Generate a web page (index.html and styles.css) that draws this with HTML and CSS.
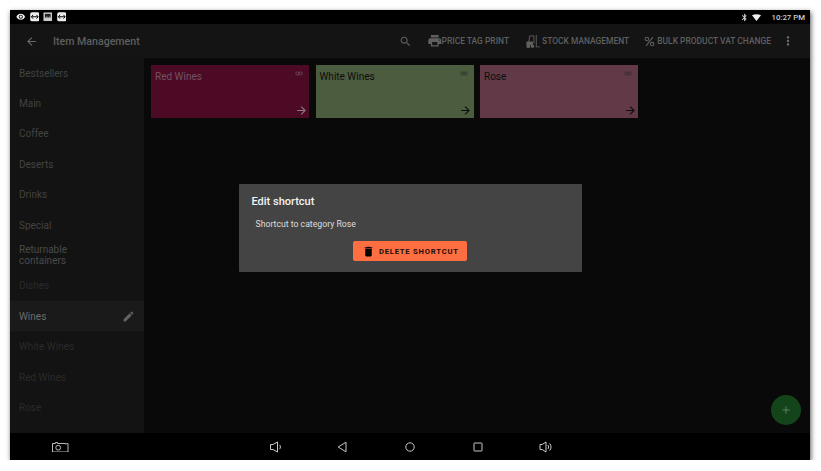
FILE: index.html
```html
<!DOCTYPE html>
<html lang="en">
<head>
  <meta charset="UTF-8" />
  <title>Item Management</title>
  <link rel="stylesheet" href="styles.css">
</head>
<body>
  <div class="device">
    <div class="status-bar">
      <div class="status-left">
        <svg class="st-icon" viewBox="0 0 24 24"><path d="M12 4.5C7 4.5 2.73 7.61 1 12c1.73 4.39 6 7.5 11 7.5s9.27-3.11 11-7.5c-1.73-4.39-6-7.5-11-7.5zM12 17c-2.76 0-5-2.24-5-5s2.24-5 5-5 5 2.24 5 5-2.24 5-5 5zm0-8c-1.66 0-3 1.34-3 3s1.34 3 3 3 3-1.34 3-3-1.34-3-3-3z"/></svg>
        <svg class="st-icon" viewBox="0 0 10 10"><rect x="0.2" y="0.2" width="9.6" height="9.6" rx="2"/><path d="M1.5 5h7M3.2 3 1.5 5l1.7 2M6.8 3l1.7 2-1.7 2" fill="none" stroke="#000" stroke-width="1"/></svg>
        <svg class="st-icon" viewBox="0 0 10 10"><rect x="0.5" y="0.5" width="9" height="9" fill="#ccc"/><rect x="2" y="2" width="6" height="4" fill="#222"/><path d="M2 6 4 4.5 5.5 5.5 7 4.5 8 6z" fill="#999"/></svg>
        <svg class="st-icon" viewBox="0 0 10 10"><rect x="0.2" y="0.2" width="9.6" height="9.6" rx="2"/><path d="M1.5 5h7M3.2 3 1.5 5l1.7 2M6.8 3l1.7 2-1.7 2" fill="none" stroke="#000" stroke-width="1"/></svg>
      </div>
      <div class="status-right">
        <svg class="bt-icon" viewBox="0 0 24 24"><path d="M17.71 7.71L12 2h-1v7.59L6.41 5 5 6.41 10.59 12 5 17.59 6.41 19 11 14.41V22h1l5.71-5.71-4.3-4.29 4.3-4.29zM13 5.83l1.88 1.88L13 9.59V5.83zm1.88 10.46L13 18.17v-3.76l1.88 1.88z"/></svg>
        <svg class="wifi-icon" viewBox="0 0 12 9"><path d="M0 1.6C3.4-.5 8.6-.5 12 1.6L6 9z"/></svg>
        <span class="clock">10:27 PM</span>
      </div>
    </div>

    <header class="app-bar">
      <svg class="back-icon" viewBox="0 0 24 24"><path d="M20 11H7.83l5.59-5.59L12 4l-8 8 8 8 1.41-1.41L7.83 13H20v-2z"/></svg>
      <h1>Item Management</h1>
      <div class="actions">
        <svg class="search-icon" viewBox="0 0 24 24"><path d="M15.5 14h-.79l-.28-.27C15.41 12.59 16 11.11 16 9.5 16 5.91 13.09 3 9.5 3S3 5.91 3 9.5 5.91 16 9.5 16c1.61 0 3.09-.59 4.23-1.57l.27.28v.79l5 4.99L20.49 19l-4.99-5zm-6 0C7.01 14 5 11.99 5 9.5S7.01 5 9.5 5 14 7.01 14 9.5 11.99 14 9.5 14z"/></svg>
        <div class="action print">
          <svg viewBox="0 0 24 24"><path d="M19 8H5c-1.66 0-3 1.34-3 3v6h4v4h12v-4h4v-6c0-1.66-1.34-3-3-3zm-3 11H8v-5h8v5zm3-7c-.55 0-1-.45-1-1s.45-1 1-1 1 .45 1 1-.45 1-1 1zm-1-9H6v4h12V3z"/></svg>
          <span>PRICE TAG PRINT</span>
        </div>
        <div class="action stock">
          <svg viewBox="0 0 16 16"><path d="M4 8.5 5 2h4.5v8" fill="none" stroke-width="1"/><path d="M1.5 8h7v4h-7z" stroke="none"/><circle cx="3.5" cy="13" r="2" stroke="none"/><circle cx="8" cy="13" r="1.8" stroke="none"/><path d="M11.5 1v13.2H16v-1h-3.5V1z" stroke="none"/></svg>
          <span>STOCK MANAGEMENT</span>
        </div>
        <div class="action vat">
          <svg viewBox="0 0 14 14"><path d="M11.3 1.5 2.6 12.5" fill="none" stroke-width="1.4"/><circle cx="3.6" cy="3.7" r="2.2" fill="none" stroke-width="1.3"/><circle cx="10.4" cy="10.3" r="2.2" fill="none" stroke-width="1.3"/></svg>
          <span>BULK PRODUCT VAT CHANGE</span>
        </div>
        <svg class="more-icon" viewBox="0 0 24 24"><path d="M12 8c1.1 0 2-.9 2-2s-.9-2-2-2-2 .9-2 2 .9 2 2 2zm0 2c-1.1 0-2 .9-2 2s.9 2 2 2 2-.9 2-2-.9-2-2-2zm0 6c-1.1 0-2 .9-2 2s.9 2 2 2 2-.9 2-2-.9-2-2-2z"/></svg>
      </div>
    </header>

    <div class="main">
      <nav class="sidebar">
        <div class="side-item">Bestsellers</div>
        <div class="side-item">Main</div>
        <div class="side-item">Coffee</div>
        <div class="side-item">Deserts</div>
        <div class="side-item">Drinks</div>
        <div class="side-item">Special</div>
        <div class="side-item two-line">Returnable containers</div>
        <div class="side-item faded">Dishes</div>
        <div class="side-item active">Wines
          <svg viewBox="0 0 24 24"><path d="M3 17.25V21h3.75L17.81 9.94l-3.75-3.75L3 17.25zM20.71 7.04c.39-.39.39-1.02 0-1.41l-2.34-2.34c-.39-.39-1.02-.39-1.41 0l-1.83 1.83 3.75 3.75 1.83-1.83z"/></svg>
        </div>
        <div class="side-item faded">White Wines</div>
        <div class="side-item faded">Red Wines</div>
        <div class="side-item faded">Rose</div>
      </nav>

      <section class="content">
        <div class="card red">
          <span class="card-title">Red Wines</span>
          <svg class="link-icon" viewBox="0 0 10 6"><circle cx="3" cy="3" r="2"/><circle cx="7" cy="3" r="2"/></svg>
          <svg class="arrow-icon" viewBox="0 0 24 24"><path d="M12 4l-1.41 1.41L16.17 11H4v2h12.17l-5.58 5.59L12 20l8-8z"/></svg>
        </div>
        <div class="card green">
          <span class="card-title">White Wines</span>
          <svg class="link-icon" viewBox="0 0 10 6"><circle cx="3" cy="3" r="2"/><circle cx="7" cy="3" r="2"/></svg>
          <svg class="arrow-icon" viewBox="0 0 24 24"><path d="M12 4l-1.41 1.41L16.17 11H4v2h12.17l-5.58 5.59L12 20l8-8z"/></svg>
        </div>
        <div class="card rose">
          <span class="card-title">Rose</span>
          <svg class="link-icon" viewBox="0 0 10 6"><circle cx="3" cy="3" r="2"/><circle cx="7" cy="3" r="2"/></svg>
          <svg class="arrow-icon" viewBox="0 0 24 24"><path d="M12 4l-1.41 1.41L16.17 11H4v2h12.17l-5.58 5.59L12 20l8-8z"/></svg>
        </div>
        <div class="fab">
          <svg viewBox="0 0 24 24"><path d="M19 13h-6v6h-2v-6H5v-2h6V5h2v6h6v2z"/></svg>
        </div>
      </section>
    </div>

    <footer class="nav-bar">
      <svg class="camera" viewBox="0 0 16.5 10.5"><path d="M.5 1.5h3V.5h2v1h7.5M15 1.5h1v8.5H.5v-8.5"/><circle cx="6.2" cy="5.7" r="2.4"/><rect x="13.2" y="1" width="1.4" height="1.4" fill="#bbb" stroke="none"/></svg>
      <svg class="nav-icon vol-down" viewBox="0 0 14 14"><path d="M1.5 4.5h2.5L8.5 2v10L4 9.5H1.5zM10.5 4.8c1.2 1.2 1.2 3.2 0 4.4"/></svg>
      <svg class="nav-icon back" viewBox="0 0 14 14"><path d="M11 2.2v9.6L3.2 7z"/></svg>
      <svg class="nav-icon home" viewBox="0 0 14 14"><circle cx="7" cy="7" r="4.2"/></svg>
      <svg class="nav-icon recent" viewBox="0 0 14 14"><rect x="3" y="3" width="8" height="8" rx=".5"/></svg>
      <svg class="nav-icon vol-up" viewBox="0 0 14 14"><path d="M1 4.5h2.2L7 2v10L3.2 9.5H1zM8.8 5c1 1.1 1 2.9 0 4M10.6 3.4c1.9 2 1.9 5.2 0 7.2"/></svg>
    </footer>

    <div class="overlay">
      <div class="dialog">
        <h2>Edit shortcut</h2>
        <p>Shortcut to category Rose</p>
        <div class="dialog-actions">
          <button class="delete-btn">
            <svg viewBox="0 0 24 24"><path d="M6 19c0 1.1.9 2 2 2h8c1.1 0 2-.9 2-2V7H6v12zM19 4h-3.5l-1-1h-5l-1 1H5v2h14V4z"/></svg>
            DELETE SHORTCUT
          </button>
        </div>
      </div>
    </div>
  </div>
</body>
</html>
```

FILE: styles.css
```css
* {
  margin: 0;
  padding: 0;
  box-sizing: border-box;
  font-family: Roboto, "Liberation Sans", sans-serif;
}

body {
  background: #fff;
  padding: 10px 0 0 10px;
}

.device {
  position: relative;
  width: 800px;
  height: 450px;
  display: flex;
  flex-direction: column;
  background: #000;
  box-shadow: 1px 2px 5px rgba(0, 0, 0, 0.65);
}

.status-bar {
  height: 14px;
  display: flex;
  justify-content: space-between;
  align-items: center;
  background: #000;
  padding: 0 5px 0 6px;
}

.status-left,
.status-right {
  display: flex;
  align-items: center;
}

.status-left {
  gap: 4px;
}

.st-icon {
  width: 9.5px;
  height: 9.5px;
  fill: #eee;
}

.bt-icon {
  width: 9px;
  height: 9px;
  fill: #ddd;
}

.wifi-icon {
  width: 9px;
  height: 7px;
  fill: #eee;
  margin-left: 3px;
}

.clock {
  margin-left: 10px;
  font-size: 7.8px;
  font-weight: 500;
  color: #ccc;
}

.app-bar {
  height: 34px;
  display: flex;
  align-items: center;
  background: #141414;
  padding-left: 15px;
}

.back-icon {
  width: 13px;
  height: 13px;
  fill: #6a6a6a;
}

.app-bar h1 {
  margin-left: 15px;
  font-size: 10.6px;
  font-weight: 500;
  color: #5f5f5f;
}

.actions {
  margin-left: auto;
  display: flex;
  align-items: center;
  color: #5f5f5f;
}

.search-icon {
  width: 13px;
  height: 13px;
  fill: #606060;
}

.action {
  display: flex;
  align-items: center;
  font-size: 8.45px;
  font-weight: 500;
}

.action svg {
  fill: #606060;
  stroke: #606060;
}

.print {
  margin-left: 15px;
}

.print svg {
  width: 15.5px;
  height: 15.5px;
  margin-right: -1px;
  stroke: none;
}

.stock {
  margin-left: 16px;
  gap: 2px;
}

.stock svg {
  width: 15px;
  height: 15px;
}

.vat {
  margin-left: 15px;
  gap: 2px;
}

.vat svg {
  width: 11px;
  height: 11px;
}

.more-icon {
  width: 14px;
  height: 14px;
  fill: #707070;
  margin: 0 15px 0 10px;
}

.main {
  flex: 1;
  display: flex;
  min-height: 0;
}

.sidebar {
  width: 134px;
  background: #131313;
}

.side-item {
  height: 30.4px;
  display: flex;
  align-items: center;
  justify-content: space-between;
  padding: 1px 9px 0;
  font-size: 10px;
  color: #424242;
  border-bottom: 1px solid #151515;
}

.two-line {
  line-height: 11px;
  padding-right: 50px;
  padding-top: 0;
  color: #4a4a4a;
}

.faded {
  color: #2a2a2a;
}

.active {
  background: #1a1a1a;
  color: #6a6a6a;
}

.active svg {
  width: 13px;
  height: 13px;
  fill: #636363;
}

.content {
  position: relative;
  flex: 1;
  background: #090909;
  display: flex;
  align-items: flex-start;
  gap: 6.5px;
  padding: 7px 7px;
}

.card {
  position: relative;
  width: 158px;
  height: 53px;
  padding: 6px 4px;
  font-size: 10px;
}

.card-title {
  line-height: 12px;
  color: #0d0d0d;
}

.red {
  background: #4d0a25;
}

.red .card-title {
  color: #6f5461;
}

.green {
  background: #4c5c3f;
}

.rose {
  background: #623a47;
}

.link-icon {
  position: absolute;
  top: 6px;
  right: 6px;
  width: 8px;
  height: 5px;
  fill: none;
  stroke: #2b2b2b;
  stroke-width: 1;
}

.red .link-icon {
  stroke: #6f5461;
}

.arrow-icon {
  position: absolute;
  right: 1.5px;
  bottom: 1px;
  width: 13px;
  height: 13px;
  fill: #0d0d0d;
}

.red .arrow-icon {
  fill: #8d7a83;
}

.fab {
  position: absolute;
  right: 9px;
  bottom: 8px;
  width: 30px;
  height: 30px;
  border-radius: 50%;
  background: #14451a;
  display: flex;
  align-items: center;
  justify-content: center;
}

.fab svg {
  width: 12px;
  height: 12px;
  fill: #5f7d62;
}

.nav-bar {
  position: relative;
  height: 27px;
  background: #000;
}

.nav-bar svg {
  position: absolute;
  top: 7px;
  width: 14px;
  height: 14px;
  fill: none;
  stroke: #c8c8c8;
  stroke-width: 1;
}

.nav-bar .camera {
  left: 42px;
  width: 16.5px;
  height: 10.5px;
  top: 8.5px;
  stroke: #bbb;
}

.vol-down {
  left: 259px;
}

.back {
  left: 324.5px;
}

.home {
  left: 393.3px;
}

.recent {
  left: 461.3px;
}

.vol-up {
  left: 528.5px;
}

.overlay {
  position: absolute;
  inset: 0;
  display: flex;
  align-items: center;
  justify-content: center;
  padding-bottom: 14px;
}

.dialog {
  width: 343px;
  height: 88px;
  background: #444;
  border-radius: 1px;
  padding: 11px 13px;
}

.dialog h2 {
  font-size: 11px;
  line-height: 14px;
  font-weight: 500;
  color: #f2f2f2;
}

.dialog p {
  margin: 10px 0 0 4px;
  font-size: 8.7px;
  line-height: 11px;
  color: #ddd;
}

.dialog-actions {
  display: flex;
  justify-content: center;
  margin-top: 11px;
}

.delete-btn {
  width: 114px;
  height: 20px;
  border: none;
  border-radius: 2px;
  background: #ff6e40;
  color: #1a0c06;
  font-size: 7.6px;
  font-weight: 700;
  letter-spacing: 0.8px;
  display: flex;
  align-items: center;
  gap: 4px;
  padding-left: 9px;
}

.delete-btn svg {
  width: 13px;
  height: 13px;
  fill: #000;
}
```
